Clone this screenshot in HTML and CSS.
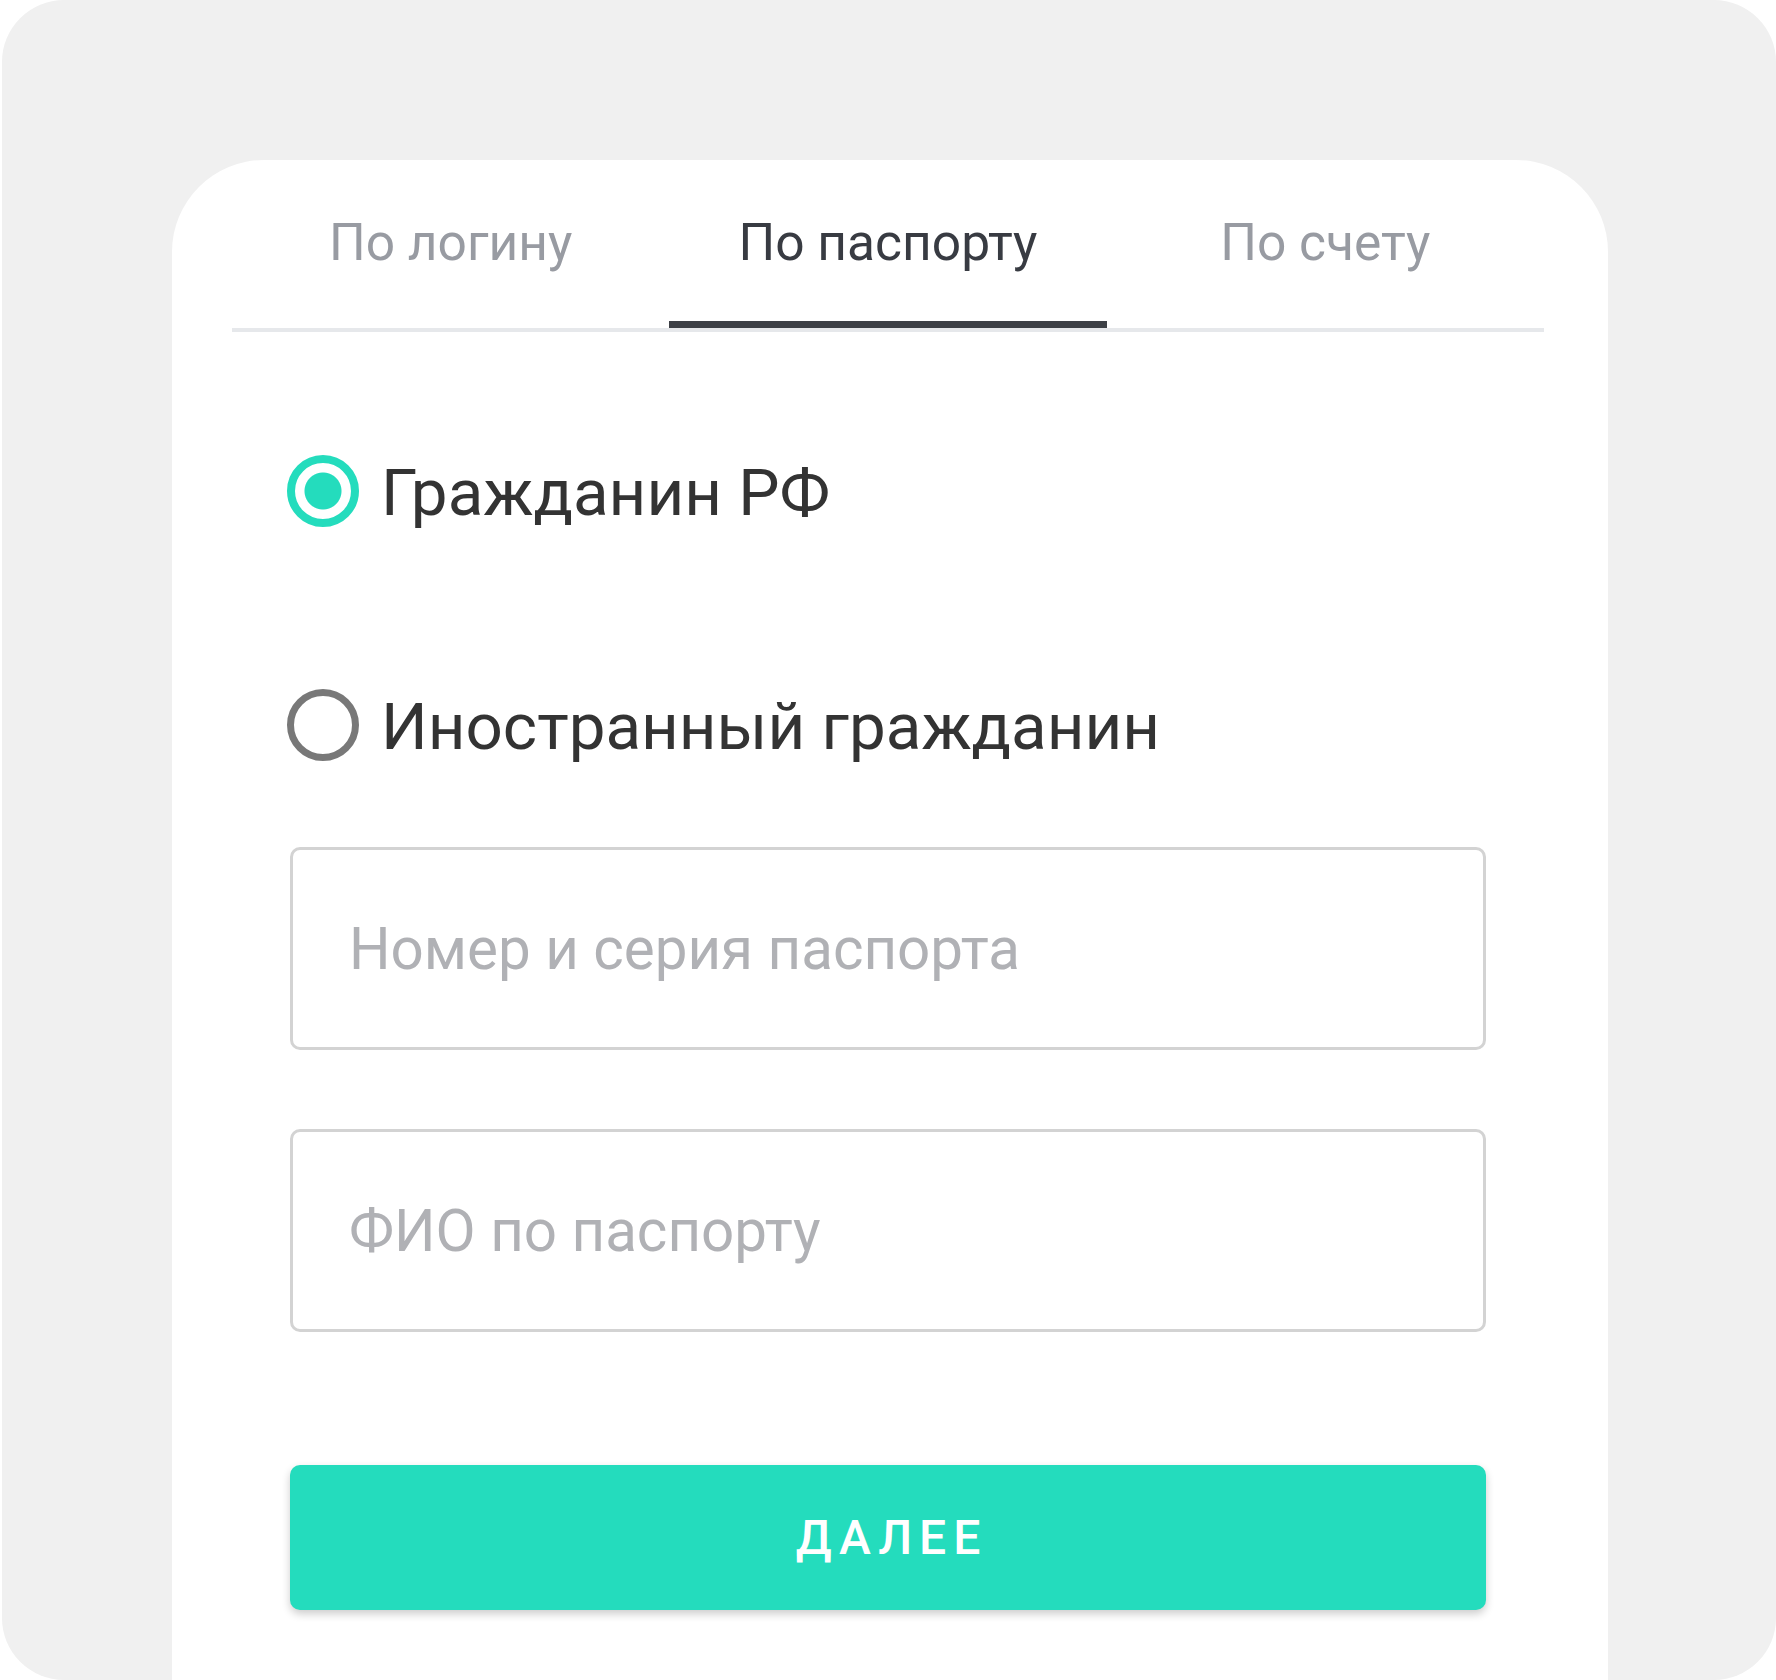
FILE: index.html
```html
<!DOCTYPE html>
<html lang="ru">
<head>
  <meta charset="UTF-8">
  <meta name="viewport" content="width=device-width, initial-scale=1.0">
  <title>Вход по паспорту</title>
  <link rel="stylesheet" href="styles.css">
</head>
<body>
  <div class="screen">
    <div class="card">

      <!-- Вкладки -->
      <nav class="tabs">
        <a class="tab" href="#">По логину</a>
        <a class="tab active" href="#">По паспорту</a>
        <a class="tab" href="#">По счету</a>
      </nav>

      <form class="form">
        <div class="radios">
          <label class="radio-row">
            <input type="radio" name="citizen" class="radio" checked>
            <span>Гражданин РФ</span>
          </label>
          <label class="radio-row">
            <input type="radio" name="citizen" class="radio">
            <span>Иностранный гражданин</span>
          </label>
        </div>

        <input type="text" class="field" placeholder="Номер и серия паспорта">
        <input type="text" class="field" placeholder="ФИО по паспорту">

        <button type="button" class="btn">Далее</button>
      </form>

    </div>
  </div>
</body>
</html>
```

FILE: styles.css
```css
* {
  box-sizing: border-box;
  margin: 0;
  padding: 0;
}

body {
  font-family: Roboto, 'Liberation Sans', sans-serif;
  background-color: #fff;
  color: #333;
  overflow: hidden;
}

.screen {
  margin-left: 2px;
  height: 1680px;
  background-color: #f0f0f0;
  border-radius: 62px;
  padding-top: 160px;
  overflow: hidden;
}

.card {
  margin-left: 170px;
  width: 1436px;
  height: 1520px;
  background-color: #fff;
  border-radius: 92px 92px 0 0;
}

/* Вкладки */
.tabs {
  display: flex;
  margin: 0 64px 0 60px;
  border-bottom: 4px solid #e6e8eb;
}

.tab {
  flex: 1;
  text-align: center;
  font-size: 51.5px;
  line-height: 64px;
  padding: 51px 0 46px;
  color: #989ba2;
  text-decoration: none;
  border-bottom: 7px solid transparent;
}

.tab.active {
  color: #383b42;
  border-bottom-color: #3d4046;
}

.form {
  width: 1196px;
  margin-left: 118px;
  display: flex;
  flex-direction: column;
}

.radios {
  margin: 121px 0 80px -3px;
  display: flex;
  flex-direction: column;
  gap: 154px;
}

.radio-row {
  display: flex;
  align-items: center;
  gap: 22px;
  font-size: 65.5px;
  line-height: 80px;
  color: #333;
  cursor: pointer;
}

.radio {
  appearance: none;
  -webkit-appearance: none;
  width: 72px;
  height: 72px;
  margin-top: -4px;
  border-radius: 50%;
  border: 7px solid #787878;
  background: #fff;
  flex-shrink: 0;
}

.radio:checked {
  border: 8px solid #24dcbd;
  background: radial-gradient(circle, #24dcbd 0 18px, #fff 19px);
}

.field {
  height: 203px;
  border: 3px solid #d3d3d3;
  border-radius: 10px;
  padding: 0 56px;
  font-family: Roboto, 'Liberation Sans', sans-serif;
  font-size: 58.3px;
  color: #333;
  outline: none;
}

.field + .field {
  margin-top: 79px;
}

.field::placeholder {
  color: #b0b1b5;
}

.btn {
  margin-top: 133px;
  height: 145px;
  border: none;
  border-radius: 10px;
  padding-left: 7px;
  background-color: #24dcbd;
  color: #fff;
  font-family: Roboto, 'Liberation Sans', sans-serif;
  font-size: 48px;
  font-weight: 500;
  letter-spacing: 7px;
  text-transform: uppercase;
  box-shadow: 0 4px 8px rgba(0, 0, 0, 0.2);
  cursor: pointer;
}
```
